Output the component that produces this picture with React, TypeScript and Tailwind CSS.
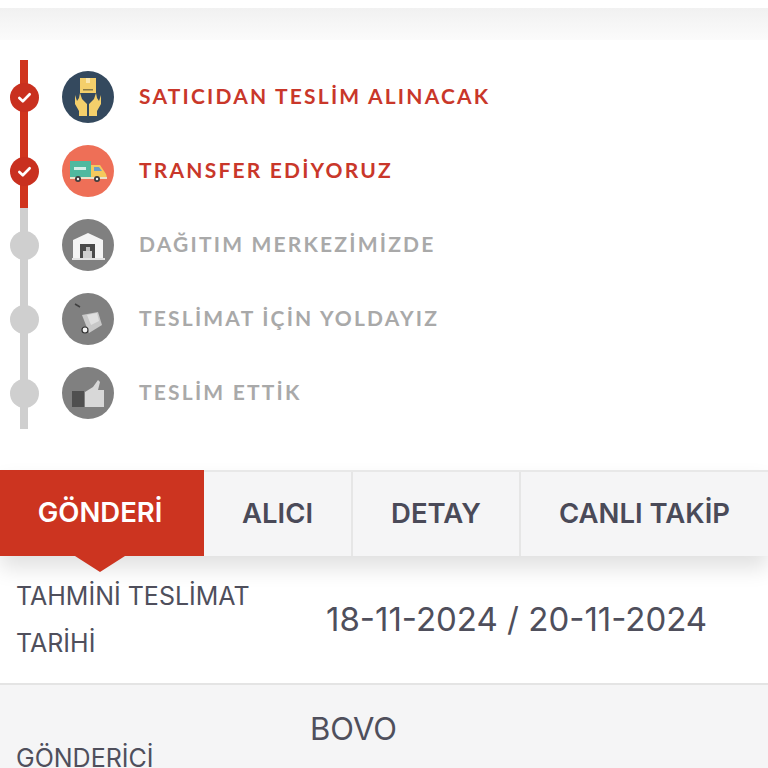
const steps = [
  { label: 'SATICIDAN TESLİM ALINACAK', done: true, icon: 'hands' },
  { label: 'TRANSFER EDİYORUZ', done: true, icon: 'truck' },
  { label: 'DAĞITIM MERKEZİMİZDE', done: false, icon: 'house' },
  { label: 'TESLİMAT İÇİN YOLDAYIZ', done: false, icon: 'cart' },
  { label: 'TESLİM ETTİK', done: false, icon: 'thumb' },
]

function StepIcon({ name }: { name: string }) {
  if (name === 'hands') {
    return (
      <svg viewBox="0 0 52 52" className="w-[52px] h-[52px]">
        <circle cx="26" cy="26" r="26" fill="#34495e" />
        <rect x="18" y="7" width="16" height="15" fill="#f4cf6b" />
        <rect x="24" y="7" width="4" height="5" fill="#fbe7ae" />
        <rect x="21" y="18" width="10" height="1.5" fill="#8a7a45" />
        <path d="M18 22 L20 28 L25 33 L25 45 L17 45 L17 40 L13 33 L13 24 L15 30 L17 27 Z" fill="#f4cf6b" />
        <path d="M34 22 L32 28 L27 33 L27 45 L35 45 L35 40 L39 33 L39 24 L37 30 L35 27 Z" fill="#f4cf6b" />
      </svg>
    )
  }
  if (name === 'truck') {
    return (
      <svg viewBox="0 0 52 52" className="w-[52px] h-[52px]">
        <circle cx="26" cy="26" r="26" fill="#ee6f57" />
        <rect x="8" y="16" width="21" height="16" fill="#4fb99f" />
        <path d="M12 22 L24 22 L24 25 L12 25 Z" fill="#d5efe8" />
        <path d="M29 20 L38 20 L44 29 L45 33 L29 33 Z" fill="#f4c95d" />
        <path d="M32 22 L37 22 L40 26 L32 26 Z" fill="#6d9ec9" />
        <rect x="8" y="32" width="37" height="2" fill="#e9e2c9" />
        <circle cx="16" cy="34" r="3" fill="#3d3d3d" />
        <circle cx="16" cy="34" r="1.2" fill="#f3f3f3" />
        <circle cx="35" cy="34" r="3" fill="#3d3d3d" />
        <circle cx="35" cy="34" r="1.2" fill="#f3f3f3" />
      </svg>
    )
  }
  if (name === 'house') {
    return (
      <svg viewBox="0 0 52 52" className="w-[52px] h-[52px]">
        <circle cx="26" cy="26" r="26" fill="#808080" />
        <path d="M11 21 L26 14 L41 21 L41 39 L11 39 Z" fill="#f4f4f4" />
        <rect x="18" y="25" width="15" height="14" fill="#4a4a4a" />
        <rect x="21" y="32" width="9" height="7" fill="#cfcfcf" />
        <rect x="24" y="28" width="4" height="4" fill="#bdbdbd" />
        <rect x="10" y="39" width="33" height="2" fill="#e2e2e2" />
      </svg>
    )
  }
  if (name === 'cart') {
    return (
      <svg viewBox="0 0 52 52" className="w-[52px] h-[52px]">
        <circle cx="26" cy="26" r="26" fill="#808080" />
        <path d="M13 11 L18 14" stroke="#3f3f3f" strokeWidth="1.5" />
        <path d="M20 22 L36 19 L40 32 L27 40 Z" fill="#c8c8c8" />
        <path d="M25 22 L35 20 L37 28 L29 32 Z" fill="#e0e0e0" />
        <circle cx="23" cy="37" r="3" fill="#f4f4f4" stroke="#333333" strokeWidth="1.2" />
      </svg>
    )
  }
  return (
    <svg viewBox="0 0 52 52" className="w-[52px] h-[52px]">
      <circle cx="26" cy="26" r="26" fill="#808080" />
      <rect x="10" y="24" width="12" height="16" fill="#4f4f4f" />
      <path d="M23 25 L31 20 L36 13 L38 15 L36 23 L42 23 L42 40 L23 40 Z" fill="#d8d8d8" />
    </svg>
  )
}

function Check() {
  return (
    <svg viewBox="0 0 16 16" className="w-[15px] h-[15px]" fill="none" stroke="#ffffff" strokeWidth="2.8" strokeLinecap="round" strokeLinejoin="round">
      <path d="M2.5 8.5 L6.2 12 L13.5 4.5" />
    </svg>
  )
}

export default function App() {
  return (
    <div className="w-[768px] h-[768px] overflow-hidden bg-white font-['Inter',sans-serif]">
      <div className="mt-2 h-8 bg-gradient-to-b from-[#f1f1f1] to-[#fbfbfb]" />

      <div className="relative mt-5 h-[369px] flex flex-col">
        <div className="absolute left-5 top-0 w-2 h-[148px] bg-[#d0341d]" />
        <div className="absolute left-5 top-[148px] w-2 h-[221px] bg-[#cfcfcf]" />
        <div className="pt-[11px] flex flex-col gap-[22px]">
          {steps.map((s) => (
            <div key={s.label} className="flex items-center h-[52px] pl-[10px]">
              <div className={`relative w-[29px] h-[29px] rounded-full flex items-center justify-center ${s.done ? 'bg-[#c9301f]' : 'bg-[#cfcfcf]'}`}>
                {s.done && <Check />}
              </div>
              <div className="ml-[23px]">
                <StepIcon name={s.icon} />
              </div>
              <span className={`ml-[25px] mb-[2px] font-['Lato',sans-serif] text-[21px] font-bold tracking-[2.2px] ${s.done ? 'text-[#c9372a]' : 'text-[#a9a9a9]'}`}>
                {s.label}
              </span>
            </div>
          ))}
        </div>
      </div>

      <div className="relative mt-[41px] h-[86px] flex bg-[#f5f5f6] border-t-2 border-[#e8e8e8] shadow-[0_12px_20px_rgba(0,0,0,0.12)] text-[27.5px] font-semibold text-[#4a4a58]">
        <div className="relative -mt-[2px] w-[204px] h-[86px] pr-1 bg-[#cc3420] text-white flex items-center justify-center">
          GÖNDERİ
          <div className="absolute left-[75px] top-[86px] w-0 h-0 border-x-[25px] border-x-transparent border-t-[16px] border-t-[#cc3420]" />
        </div>
        <div className="w-[149px] border-r-2 border-[#e6e6e6] flex items-center justify-center">ALICI</div>
        <div className="w-[168px] border-r-2 border-[#e6e6e6] flex items-center justify-center">DETAY</div>
        <div className="flex-1 flex items-center justify-center">CANLI TAKİP</div>
      </div>

      <div className="h-[129px] flex items-center bg-white border-b-2 border-[#e4e4e4] text-[#4f4f5c]">
        <div className="w-[326px] pl-4 pr-[60px] text-[25px] leading-[47px]">TAHMİNİ TESLİMAT TARİHİ</div>
        <div className="text-[33px]">18-11-2024 / 20-11-2024</div>
      </div>

      <div className="h-[120px] flex bg-[#f5f5f6] text-[#4f4f5c]">
        <div className="w-[310px] pl-4 pt-[57px] text-[25px] leading-[32px]">GÖNDERİCİ</div>
        <div className="pt-[24px] text-[31px] leading-[40px]">BOVO</div>
      </div>
    </div>
  )
}
